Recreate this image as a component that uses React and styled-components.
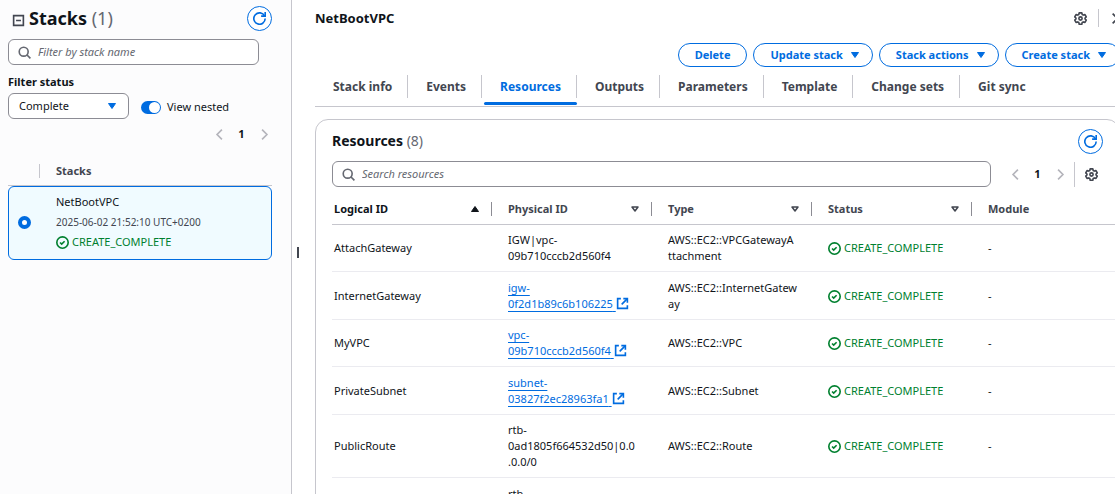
import React from "react";
import styled, { createGlobalStyle, css } from "styled-components";

const c = {
  blue: "#006ce0",
  text: "#0f141a",
  muted: "#424650",
  soft: "#656871",
  line: "#c6c6cd",
  rowLine: "#ebebf0",
  field: "#8c8c94",
  green: "#00802f",
};

const Global = createGlobalStyle`
  *, *::before, *::after { box-sizing: border-box; }
  body {
    margin: 0;
    overflow: hidden;
    background: #fff;
    color: ${c.text};
    font: 11px/16px "Noto Sans", "Open Sans", sans-serif;
  }
  button, input, select { font: inherit; color: inherit; margin: 0; }
  h1, h2, p { margin: 0; }
`;

const Page = styled.div`
  display: flex;
  height: 100vh;
  overflow: hidden;
`;

/* ---------- icons ---------- */
const Svg = styled.svg`
  display: block;
  flex: none;
  width: ${(p) => p.$size || 13}px;
  height: ${(p) => p.$size || 13}px;
  fill: none;
  stroke: currentColor;
  stroke-width: 2;
`;
const Icon = ({ size, children, ...rest }) => (
  <Svg viewBox="0 0 16 16" $size={size} aria-hidden="true" {...rest}>{children}</Svg>
);
const RefreshIcon = () => (
  <Icon><path d="M10 5h5V0" /><path d="M15 8a7 7 0 1 1-.7-3" /></Icon>
);
const SearchIcon = () => (
  <Icon><circle cx="7" cy="7" r="5.5" /><path d="m15.3 15.3-4.5-4.5" /></Icon>
);
const CheckIcon = () => (
  <Icon><circle cx="8" cy="8" r="7" /><path d="m5 8 2 2 3.6-3.6" /></Icon>
);
const ExternalIcon = () => (
  <Icon><path d="M9 2h5v5" /><path d="m7 9 7-7" /><path d="M14 10v4H2V2h4" /></Icon>
);
const GearIcon = () => (
  <Icon>
    <path strokeLinejoin="round" d="M6.4 1h3.2l.5 2 1.4.8 2-.6 1.6 2.8-1.5 1.4v1.2l1.5 1.4-1.6 2.8-2-.6-1.4.8-.5 2H6.4l-.5-2-1.4-.8-2 .6L.9 10l1.5-1.4V7.4L.9 6l1.6-2.8 2 .6L5.900 3z" />
    <circle cx="8" cy="8" r="2" />
  </Icon>
);
const LeftIcon = () => <Icon><path d="M11 2 5 8l6 6" /></Icon>;
const RightIcon = () => <Icon><path d="m5 2 6 6-6 6" /></Icon>;
const CloseIcon = () => <Icon><path d="m2 2 12 12M14 2 2 14" /></Icon>;
const CollapseIcon = () => <Icon><path d="M2 2h12v12H2zM5 8h6" /></Icon>;
const CaretFilled = () => (
  <Icon size={16}><path d="M4.5 5.5h7L8 10.5z" fill="currentColor" strokeWidth="1" strokeLinejoin="round" /></Icon>
);
const CaretUp = () => (
  <Icon size={16}><path d="M4.5 10.5h7L8 5.5z" fill="currentColor" strokeWidth="1" strokeLinejoin="round" /></Icon>
);
const CaretOutline = () => (
  <Icon size={16}><path d="M5 6h6l-3 4z" strokeWidth="1.5" strokeLinejoin="round" /></Icon>
);

/* ---------- shared controls ---------- */
const IconButton = styled.button`
  display: flex;
  align-items: center;
  justify-content: center;
  width: 24px;
  height: 24px;
  padding: 0;
  border: 0;
  background: none;
  color: ${(p) => (p.disabled ? "#b4b4bb" : c.muted)};
`;
const RoundButton = styled(IconButton)`
  flex: none;
  width: 25px;
  height: 25px;
  border: 1px solid ${c.blue};
  border-radius: 50%;
  background: #fff;
  color: ${c.blue};
`;
const SearchBox = styled.label`
  display: flex;
  align-items: center;
  gap: 7px;
  flex: 1;
  height: 26px;
  padding: 0 9px;
  border: 1px solid ${c.field};
  border-radius: 6px;
  background: #fff;
  color: ${c.soft};
  input {
    flex: 1;
    min-width: 0;
    padding: 0;
    border: 0;
    outline: 0;
    background: none;
  }
  input::placeholder { color: ${c.soft}; font-style: italic; opacity: 1; }
`;
const Pager = styled.nav`
  display: flex;
  align-items: center;
  justify-content: flex-end;
  b { width: 21px; text-align: center; }
`;
const Count = styled.span`
  font-weight: 400;
  color: ${c.soft};
`;
const Status = styled.span`
  display: flex;
  align-items: center;
  gap: 3px;
  color: ${c.green};
`;
const Divider = styled.span`
  width: 1px;
  height: ${(p) => p.$height}px;
  background: ${c.line};
`;

const Pagination = () => (
  <Pager aria-label="Pagination">
    <IconButton disabled aria-label="Previous page"><LeftIcon /></IconButton>
    <b>1</b>
    <IconButton disabled aria-label="Next page"><RightIcon /></IconButton>
  </Pager>
);
const Complete = () => <Status><CheckIcon />CREATE_COMPLETE</Status>;

/* ---------- sidebar ---------- */
const Sidebar = styled.aside`
  flex: none;
  width: 292px;
  padding: 5px 19px 0 8px;
  border-right: 1px solid ${c.line};
  background: #fcfcfd;
`;
const SideHeader = styled.header`
  display: flex;
  align-items: center;
  justify-content: space-between;
  height: 26px;
  margin-bottom: 8px;
`;
const SideTitle = styled.div`
  display: flex;
  align-items: center;
  gap: 1px;
  h1 { font-size: 18px; line-height: 24px; }
`;
const CollapseButton = styled(IconButton)`
  width: 20px;
  padding-top: 4px;
`;
const SideSearch = styled.div`
  display: flex;
  padding-right: 13px;
  margin-bottom: 9px;
`;
const FieldLabel = styled.label`
  display: block;
  margin-bottom: 3px;
  font-weight: 700;
`;
const FilterRow = styled.div`
  display: flex;
  align-items: center;
  gap: 12px;
`;
const SelectWrap = styled.div`
  position: relative;
  width: 121px;
  svg {
    position: absolute;
    right: 9px;
    top: 5px;
    color: ${c.blue};
    pointer-events: none;
  }
`;
const Select = styled.select`
  appearance: none;
  display: block;
  width: 100%;
  height: 26px;
  padding: 0 10px;
  border: 1px solid ${c.field};
  border-radius: 6px;
  background: #fff;
`;
const ToggleLabel = styled.label`
  display: flex;
  align-items: center;
  gap: 6px;
  padding-top: 2px;
`;
const Toggle = styled.input`
  appearance: none;
  display: flex;
  align-items: center;
  justify-content: flex-end;
  width: 20px;
  height: 13px;
  padding: 0 1px;
  border-radius: 7px;
  background: ${c.blue};
  &::before {
    content: "";
    width: 11px;
    height: 11px;
    border-radius: 50%;
    background: #fff;
  }
`;
const SidePager = styled.div`
  padding: 3px 0 18px;
  margin-right: -4px;
`;
const ListHead = styled.div`
  display: flex;
  align-items: center;
  gap: 16px;
  box-sizing: content-box;
  height: 14px;
  padding: 0 0 7px 31px;
  border-bottom: 1px solid ${c.line};
  color: ${c.muted};
  font-weight: 700;
`;
const StackCard = styled.label`
  display: grid;
  grid-template-columns: 13px 1fr;
  gap: 25px;
  align-items: center;
  height: 74px;
  padding: 0 9px 2px;
  border: 1px solid ${c.blue};
  border-radius: 6px;
  background: #f0fbff;
`;
const Radio = styled.input`
  appearance: none;
  width: 13px;
  height: 13px;
  border: 4px solid ${c.blue};
  border-radius: 50%;
  background: #fff;
`;
const StackText = styled.div`
  display: grid;
  gap: 4px;
  time { font-size: 10px; color: ${c.muted}; }
`;

/* ---------- main ---------- */
const Gutter = styled.div`
  flex: none;
  display: flex;
  align-items: center;
  width: 23px;
  padding-left: 5px;
  &::before {
    content: "";
    width: 2px;
    height: 11px;
    margin-top: 10px;
    background: ${c.muted};
  }
`;
const Main = styled.main`
  flex: 1;
  min-width: 0;
  margin-right: -5px;
`;
const TitleRow = styled.header`
  display: flex;
  align-items: center;
  justify-content: space-between;
  height: 36px;
  h2 { font-size: 13px; }
`;
const HeadTools = styled.div`
  display: flex;
  align-items: center;
  gap: 6px;
  margin-right: -9px;
`;
const Actions = styled.div`
  display: flex;
  justify-content: flex-end;
  gap: 6px;
  padding-top: 7px;
`;
const Action = styled.button`
  display: flex;
  align-items: center;
  gap: 4px;
  height: 24px;
  padding: 0 ${(p) => (p.$menu ? 9 : 16)}px 0 16px;
  border: 1px solid ${c.blue};
  border-radius: 12px;
  background: #fff;
  color: ${c.blue};
  font-weight: 700;
`;
const Tabs = styled.nav`
  display: flex;
  height: 40px;
  padding: 8px 0 0 2px;
  border-bottom: 1px solid ${c.line};
`;
const Tab = styled.a`
  position: relative;
  height: 31px;
  padding: 3px 16px 0;
  margin-right: 2px;
  color: ${c.muted};
  font-size: 12px;
  line-height: 18px;
  font-weight: 700;
  text-decoration: none;
  white-space: nowrap;
  &:not(:last-child)::after {
    content: "";
    position: absolute;
    right: 0;
    top: 0;
    width: 1px;
    height: 23px;
    background: ${c.line};
  }
  ${(p) =>
    p.$active &&
    css`
      color: ${c.blue};
      &::before {
        content: "";
        position: absolute;
        inset: auto 0 1px 0;
        height: 3px;
        border-radius: 2px;
        background: ${c.blue};
      }
    `}
`;
const Panel = styled.section`
  margin-top: 12px;
  padding: 9px 16px 0;
  border: 1px solid ${c.line};
  border-radius: 13px;
`;
const PanelHead = styled.header`
  display: flex;
  justify-content: space-between;
  height: 25px;
  margin-bottom: 7px;
  h2 { font-size: 14px; line-height: 24px; }
`;
const Toolbar = styled.div`
  display: flex;
  align-items: center;
  height: 26px;
  ${Pager} { margin: 0 2px 0 12px; }
  > ${IconButton} { margin-left: 4px; }
`;
const Table = styled.table`
  width: calc(100% + 16px);
  table-layout: fixed;
  border-collapse: separate;
  border-spacing: 0;
  text-align: left;
`;
const Th = styled.th`
  width: ${(p) => (p.$last ? "auto" : "160px")};
  height: 38px;
  padding: 6px 0 0 ${(p) => (p.$first ? 2 : 16)}px;
  border-bottom: 1px solid ${c.line};
  color: ${(p) => (p.$first ? c.text : c.muted)};
`;
const ThInner = styled.div`
  display: flex;
  align-items: center;
  justify-content: space-between;
  height: 14px;
  padding-right: 8px;
  border-right: ${(p) => (p.$last ? 0 : 1)}px solid ${c.field};
`;
const Tr = styled.tr`
  td {
    padding: 7px 0 7px 16px;
    border-bottom: 1px solid ${c.rowLine};
    white-space: pre-line;
  }
  td:first-child { padding-left: 2px; }
  &:nth-child(even) td { padding-top: 8px; }
`;
const ResourceLink = styled.a`
  color: ${c.blue};
  text-decoration: underline;
  text-underline-offset: 3px;
  svg { display: inline-block; vertical-align: -2px; }
`;

const tabs = ["Stack info", "Events", "Resources", "Outputs", "Parameters", "Template", "Change sets", "Git sync"];
const columns = ["Logical ID", "Physical ID", "Type", "Status", "Module"];
const rows = [
  { id: "AttachGateway", physical: "IGW|vpc-\n09b710cccb2d560f4", type: "AWS::EC2::VPCGatewayA\nttachment" },
  { id: "InternetGateway", physical: "igw-\n0f2d1b89c6b106225", link: true, type: "AWS::EC2::InternetGatew\nay" },
  { id: "MyVPC", physical: "vpc-\n09b710cccb2d560f4", link: true, type: "AWS::EC2::VPC" },
  { id: "PrivateSubnet", physical: "subnet-\n03827f2ec28963fa1", link: true, type: "AWS::EC2::Subnet" },
  { id: "PublicRoute", physical: "rtb-\n0ad1805f664532d50|0.0\n.0.0/0", type: "AWS::EC2::Route" },
];

export default function App() {
  return (
    <Page>
      <Global />
      <Sidebar>
        <SideHeader>
          <SideTitle>
            <CollapseButton aria-label="Collapse"><CollapseIcon /></CollapseButton>
            <h1>Stacks <Count>(1)</Count></h1>
          </SideTitle>
          <RoundButton aria-label="Refresh stacks"><RefreshIcon /></RoundButton>
        </SideHeader>
        <SideSearch>
          <SearchBox><SearchIcon /><input type="text" aria-label="Filter by stack name" placeholder="Filter by stack name" /></SearchBox>
        </SideSearch>
        <FieldLabel htmlFor="status">Filter status</FieldLabel>
        <FilterRow>
          <SelectWrap>
            <Select id="status" defaultValue="Complete"><option>Complete</option></Select>
            <CaretFilled />
          </SelectWrap>
          <ToggleLabel><Toggle type="checkbox" role="switch" defaultChecked />View nested</ToggleLabel>
        </FilterRow>
        <SidePager><Pagination /></SidePager>
        <ListHead><Divider $height={14} />Stacks</ListHead>
        <StackCard>
          <Radio type="radio" name="stack" defaultChecked />
          <StackText>
            <span>NetBootVPC</span>
            <time>2025-06-02 21:52:10 UTC+0200</time>
            <Complete />
          </StackText>
        </StackCard>
      </Sidebar>
      <Gutter />
      <Main>
        <TitleRow>
          <h2>NetBootVPC</h2>
          <HeadTools>
            <IconButton aria-label="Preferences"><GearIcon /></IconButton>
            <Divider $height={18} />
            <IconButton aria-label="Close"><CloseIcon /></IconButton>
          </HeadTools>
        </TitleRow>
        <Actions>
          <Action>Delete</Action>
          <Action $menu>Update stack<CaretFilled /></Action>
          <Action $menu>Stack actions<CaretFilled /></Action>
          <Action $menu>Create stack<CaretFilled /></Action>
        </Actions>
        <Tabs>
          {tabs.map((t) => (
            <Tab key={t} href="#" $active={t === "Resources"}>{t}</Tab>
          ))}
        </Tabs>
        <Panel>
          <PanelHead>
            <h2>Resources <Count>(8)</Count></h2>
            <RoundButton aria-label="Refresh resources"><RefreshIcon /></RoundButton>
          </PanelHead>
          <Toolbar>
            <SearchBox><SearchIcon /><input type="text" aria-label="Search resources" placeholder="Search resources" /></SearchBox>
            <Pagination />
            <Divider $height={25} />
            <IconButton aria-label="Table preferences"><GearIcon /></IconButton>
          </Toolbar>
          <Table>
            <thead>
              <tr>
                {columns.map((name, i) => (
                  <Th key={name} $first={i === 0} $last={i === 4}>
                    <ThInner $last={i === 4}>
                      {name}
                      {i === 0 ? <CaretUp /> : i < 4 && <CaretOutline />}
                    </ThInner>
                  </Th>
                ))}
              </tr>
            </thead>
            <tbody>
              {rows.map((r) => (
                <Tr key={r.id}>
                  <td>{r.id}</td>
                  <td>{r.link ? <ResourceLink href="#">{r.physical} <ExternalIcon /></ResourceLink> : r.physical}</td>
                  <td>{r.type}</td>
                  <td><Complete /></td>
                  <td>-</td>
                </Tr>
              ))}
              <Tr>
                <td />
                <td>rtb-</td>
                <td />
                <td />
                <td />
              </Tr>
            </tbody>
          </Table>
        </Panel>
      </Main>
    </Page>
  );
}
